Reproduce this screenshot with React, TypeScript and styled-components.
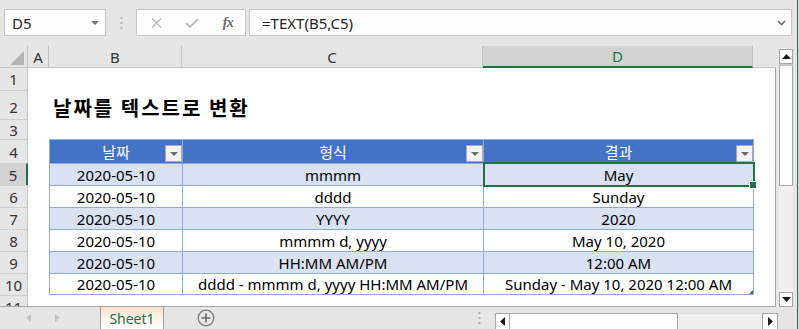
import styled, { createGlobalStyle } from "styled-components";

const GlobalStyle = createGlobalStyle`
  html, body {
    margin: 0;
    padding: 0;
    background: #ffffff;
  }
  body {
    font-family: "Noto Sans", "Noto Sans CJK KR", sans-serif;
  }
`;

const GREEN = "#217346";
const TABLE_LINE = "#8eaadb";
const HEAD_COLS = "28px 21px 133px 301px 270px 23px";
const BODY_COLS = "28px 21px 133px 301px 271px 21px";

const Window = styled.div`
  width: 799px;
  height: 329px;
  display: flex;
  flex-direction: column;
  overflow: hidden;
  background: #e6e6e6;
  box-shadow: inset -1px 0 0 #d8d8d8, inset -2px 0 0 #2c6e49;
  font-family: "Noto Sans", "Noto Sans CJK KR", sans-serif;
  color: #000;
`;

/* formula bar */
const FormulaBar = styled.div`
  height: 46px;
  flex: none;
  box-sizing: border-box;
  padding: 9px 7px 0 4px;
  display: flex;
  align-items: flex-start;
`;

const NameBox = styled.div`
  width: 102px;
  height: 27px;
  box-sizing: border-box;
  border: 1px solid #c6c6c6;
  background: #fdfdfd;
  display: flex;
  align-items: center;
  justify-content: space-between;
  padding: 0 6px 0 7px;
  font-size: 15px;
  color: #262626;
`;

const Grip = styled.div`
  width: 30px;
  height: 27px;
  display: flex;
  align-items: center;
  justify-content: center;
`;

const FxButtons = styled.div`
  width: 110px;
  height: 27px;
  box-sizing: border-box;
  border: 1px solid #c6c6c6;
  background: #fdfdfd;
  display: grid;
  grid-template-columns: repeat(3, 36px);
  padding-left: 1px;
  place-items: center;
`;

const FxLabel = styled.span`
  font-family: "Liberation Serif", serif;
  font-style: italic;
  font-weight: 700;
  font-size: 14px;
  color: #6a6a6a;
  letter-spacing: -0.5px;
`;

const FormulaInput = styled.div`
  flex: 1;
  margin-left: 3px;
  height: 27px;
  box-sizing: border-box;
  border: 1px solid #c6c6c6;
  background: #fdfdfd;
  display: flex;
  align-items: center;
  justify-content: space-between;
  padding: 0 5px 0 12px;
  font-size: 15px;
  color: #262626;
`;

/* sheet */
const Workspace = styled.div`
  height: 261px;
  flex: none;
  display: flex;
`;

const Sheet = styled.div`
  width: 776px;
  display: flex;
  flex-direction: column;
`;

const ColHeaderRow = styled.div`
  height: 22px;
  flex: none;
  display: grid;
  grid-template-columns: ${HEAD_COLS};
`;

const Corner = styled.div`
  box-sizing: border-box;
  display: flex;
  align-items: flex-end;
  justify-content: flex-end;
  padding: 0 3px 2px 0;
  border-right: 1px solid #c4c4c4;
  border-bottom: 1px solid #c4c4c4;
`;

const CornerTriangle = styled.div`
  width: 0;
  height: 0;
  border-left: 14px solid transparent;
  border-bottom: 14px solid #b5b5b5;
`;

const ColHead = styled.div<{ $active?: boolean; $plain?: boolean }>`
  box-sizing: border-box;
  display: flex;
  align-items: center;
  justify-content: center;
  font-size: 15px;
  color: ${(p) => (p.$active ? GREEN : "#333")};
  background: ${(p) => (p.$active ? "#d2d2d2" : "#e6e6e6")};
  border-right: ${(p) => (p.$plain ? "none" : "1px solid #c4c4c4")};
  border-bottom: ${(p) => (p.$active ? `2px solid ${GREEN}` : "1px solid #c4c4c4")};
`;

const Body = styled.div`
  flex: 1;
  overflow: hidden;
  background: #fff;
  border-right: 1px solid #a6a6a6;
  border-bottom: 1px solid #a6a6a6;
`;

const Row = styled.div<{ $h: number }>`
  display: grid;
  grid-template-columns: ${BODY_COLS};
  height: ${(p) => p.$h}px;
`;

const RowHead = styled.div<{ $active?: boolean; $first?: boolean }>`
  box-sizing: border-box;
  display: flex;
  align-items: center;
  justify-content: center;
  font-size: 15px;
  color: #333;
  background: ${(p) => (p.$active ? "#d2d2d2" : "#e6e6e6")};
  border-top: ${(p) => (p.$first ? "none" : "1px solid #cfcfcf")};
  border-right: ${(p) => (p.$active ? `2px solid ${GREEN}` : "1px solid #c4c4c4")};
`;

const Blank = styled.div``;

const Title = styled.div`
  display: flex;
  align-items: center;
  padding: 3px 0 0 4px;
  white-space: nowrap;
  font-family: "Noto Sans CJK KR", "Noto Sans", sans-serif;
  font-weight: 700;
  font-size: 20px;
  letter-spacing: 2px;
`;

const TableCell = styled.div<{ $band?: boolean; $last?: boolean; $right?: boolean }>`
  position: relative;
  box-sizing: border-box;
  display: flex;
  align-items: center;
  justify-content: center;
  white-space: nowrap;
  font-size: 15px;
  background: ${(p) => (p.$band ? "#d9e1f2" : "#fff")};
  border-top: 1px solid ${TABLE_LINE};
  border-left: 1px solid ${TABLE_LINE};
  ${(p) => p.$right && `border-right: 1px solid ${TABLE_LINE};`}
  ${(p) => p.$last && `border-bottom: 1px solid ${TABLE_LINE};`}
`;

const TableHead = styled(TableCell)`
  background: #4472c4;
  color: #fff;
  font-family: "Noto Sans CJK KR", "Noto Sans", sans-serif;
`;

const FilterBtn = styled.div`
  position: absolute;
  right: 0;
  bottom: 1px;
  width: 17px;
  height: 17px;
  box-sizing: border-box;
  border: 1px solid #a9a9a9;
  background: #f3f3f3;
  display: flex;
  align-items: center;
  justify-content: center;
`;

const Selection = styled.div`
  position: absolute;
  inset: -2px -2px -2px -1px;
  border: 2px solid ${GREEN};
  pointer-events: none;
  z-index: 2;
`;

const FillHandle = styled.div`
  position: absolute;
  right: -3px;
  bottom: -3px;
  width: 6px;
  height: 6px;
  background: ${GREEN};
  box-shadow: 0 0 0 1px #fff;
`;

const ResizeMark = styled.div`
  position: absolute;
  right: 0;
  bottom: 0;
  width: 0;
  height: 0;
  border-left: 4px solid transparent;
  border-bottom: 4px solid #3f63b2;
`;

/* vertical scroll */
const VScroll = styled.div`
  width: 23px;
  box-sizing: border-box;
  padding: 3px 6px 0 3px;
  display: flex;
  flex-direction: column;
`;

const ScrollBtn = styled.div<{ $w?: number; $h?: number }>`
  flex: none;
  width: ${(p) => p.$w ?? 14}px;
  height: ${(p) => p.$h ?? 15}px;
  box-sizing: border-box;
  border: 1px solid #a6a6a6;
  background: #fff;
  display: flex;
  align-items: center;
  justify-content: center;
`;

const VThumb = styled.div`
  flex: none;
  height: 122px;
  box-sizing: border-box;
  border: 1px solid #a6a6a6;
  border-top: 2px solid #c8c8c8;
  background: #fff;
`;

const Track = styled.div`
  flex: 1;
  background: #f0f0f0;
`;

/* tab bar */
const TabBar = styled.div`
  height: 22px;
  flex: none;
  display: flex;
  align-items: flex-start;
`;

const TabNav = styled.div`
  width: 100px;
  height: 22px;
  box-sizing: border-box;
  padding-left: 26px;
  display: flex;
  align-items: center;
  gap: 24px;
`;

const SheetTab = styled.div`
  width: 64px;
  height: 22px;
  box-sizing: border-box;
  border-left: 1px solid #9c9c9c;
  border-right: 1px solid #9c9c9c;
  background: linear-gradient(#fae0cd, #fff6ef 60%, #ffffff);
  display: flex;
  align-items: center;
  justify-content: center;
  font-size: 14px;
  color: ${GREEN};
`;

const AddSheet = styled.div`
  width: 18px;
  height: 22px;
  margin-left: 33px;
  display: flex;
  align-items: center;
  justify-content: center;
`;

const TabSpacer = styled.div`
  flex: 1;
`;

const TabGrip = styled.div`
  width: 16px;
  height: 22px;
  margin-right: 8px;
  display: flex;
  align-items: center;
  justify-content: center;
`;

const HScroll = styled.div`
  width: 283px;
  height: 17px;
  margin: 6px 21px 0 0;
  display: flex;
`;

const HThumb = styled.div`
  width: 168px;
  box-sizing: border-box;
  border: 1px solid #a6a6a6;
  border-left: none;
  background: #fff;
`;

const HTrack = styled.div`
  flex: 1;
  background: #f0f0f0;
  border-top: 1px solid #e0e0e0;
`;

const Dots = () => (
  <svg width="3" height="12" viewBox="0 0 3 12">
    <rect x="0.5" y="0" width="2" height="2" fill="#b3b3b3" />
    <rect x="0.5" y="5" width="2" height="2" fill="#b3b3b3" />
    <rect x="0.5" y="10" width="2" height="2" fill="#b3b3b3" />
  </svg>
);

const DownTri = ({ color = "#777" }: { color?: string }) => (
  <svg width="8" height="4" viewBox="0 0 8 4">
    <path d="M0 0h8L4 4z" fill={color} />
  </svg>
);

const rows = [
  ["2020-05-10", "mmmm", "May"],
  ["2020-05-10", "dddd", "Sunday"],
  ["2020-05-10", "YYYY", "2020"],
  ["2020-05-10", "mmmm d, yyyy", "May 10, 2020"],
  ["2020-05-10", "HH:MM AM/PM", "12:00 AM"],
  ["2020-05-10", "dddd - mmmm d, yyyy HH:MM AM/PM", "Sunday - May 10, 2020 12:00 AM"],
];

const headers = ["날짜", "형식", "결과"];

export default function App() {
  return (
    <>
      <GlobalStyle />
      <Window>
        <FormulaBar>
          <NameBox>
            <span>D5</span>
            <DownTri />
          </NameBox>
          <Grip>
            <Dots />
          </Grip>
          <FxButtons>
            <svg width="11" height="10" viewBox="0 0 11 10">
              <path d="M1 0.5L10 9.5M10 0.5L1 9.5" stroke="#bcbcbc" strokeWidth="1.4" />
            </svg>
            <svg width="14" height="10" viewBox="0 0 14 10">
              <path d="M1 5l4 4L13 1" stroke="#bcbcbc" strokeWidth="1.8" fill="none" />
            </svg>
            <FxLabel>fx</FxLabel>
          </FxButtons>
          <FormulaInput>
            <span>=TEXT(B5,C5)</span>
            <svg width="9" height="6" viewBox="0 0 9 6">
              <path d="M1 1l3.5 3.5L8 1" stroke="#6f6f6f" strokeWidth="1.6" fill="none" />
            </svg>
          </FormulaInput>
        </FormulaBar>

        <Workspace>
          <Sheet>
            <ColHeaderRow>
              <Corner>
                <CornerTriangle />
              </Corner>
              <ColHead>A</ColHead>
              <ColHead>B</ColHead>
              <ColHead>C</ColHead>
              <ColHead $active>D</ColHead>
              <ColHead $plain />
            </ColHeaderRow>
            <Body>
              <Row $h={22}>
                <RowHead $first>1</RowHead>
                <Blank />
                <Blank />
                <Blank />
                <Blank />
                <Blank />
              </Row>
              <Row $h={29}>
                <RowHead>2</RowHead>
                <Blank />
                <Title>날짜를 텍스트로 변환</Title>
                <Blank />
                <Blank />
                <Blank />
              </Row>
              <Row $h={20}>
                <RowHead>3</RowHead>
                <Blank />
                <Blank />
                <Blank />
                <Blank />
                <Blank />
              </Row>
              <Row $h={24}>
                <RowHead>4</RowHead>
                <Blank />
                {headers.map((h, i) => (
                  <TableHead key={h} $right={i === 2}>
                    {h}
                    <FilterBtn>
                      <DownTri color="#6b6b6b" />
                    </FilterBtn>
                  </TableHead>
                ))}
                <Blank />
              </Row>
              {rows.map((r, ri) => {
                const band = ri % 2 === 0;
                const last = ri === rows.length - 1;
                return (
                  <Row $h={22} key={ri}>
                    <RowHead $active={ri === 0}>{ri + 5}</RowHead>
                    <Blank />
                    <TableCell $band={band} $last={last}>
                      {r[0]}
                    </TableCell>
                    <TableCell $band={band} $last={last}>
                      {r[1]}
                    </TableCell>
                    <TableCell $band={band} $last={last} $right>
                      {r[2]}
                      {ri === 0 && (
                        <Selection>
                          <FillHandle />
                        </Selection>
                      )}
                      {last && <ResizeMark />}
                    </TableCell>
                    <Blank />
                  </Row>
                );
              })}
              <Row $h={22}>
                <RowHead>11</RowHead>
                <Blank />
                <Blank />
                <Blank />
                <Blank />
                <Blank />
              </Row>
            </Body>
          </Sheet>

          <VScroll>
            <ScrollBtn>
              <svg width="9" height="5" viewBox="0 0 9 5">
                <path d="M0 5h9L4.5 0z" fill="#1a1a1a" />
              </svg>
            </ScrollBtn>
            <VThumb />
            <Track />
            <ScrollBtn>
              <svg width="9" height="5" viewBox="0 0 9 5">
                <path d="M0 0h9L4.5 5z" fill="#1a1a1a" />
              </svg>
            </ScrollBtn>
          </VScroll>
        </Workspace>

        <TabBar>
          <TabNav>
            <svg width="5" height="8" viewBox="0 0 5 8">
              <path d="M5 0v8L0 4z" fill="#c2c2c2" />
            </svg>
            <svg width="5" height="8" viewBox="0 0 5 8">
              <path d="M0 0v8l5-4z" fill="#c2c2c2" />
            </svg>
          </TabNav>
          <SheetTab>Sheet1</SheetTab>
          <AddSheet>
            <svg width="18" height="18" viewBox="0 0 18 18">
              <circle cx="9" cy="9" r="7.8" stroke="#7a7a7a" strokeWidth="1.3" fill="none" />
              <path d="M9 4.5v9M4.5 9h9" stroke="#6a6a6a" strokeWidth="1.6" />
            </svg>
          </AddSheet>
          <TabSpacer />
          <TabGrip>
            <Dots />
          </TabGrip>
          <HScroll>
            <ScrollBtn $w={15} $h={17}>
              <svg width="5" height="9" viewBox="0 0 5 9">
                <path d="M5 0v9L0 4.5z" fill="#1a1a1a" />
              </svg>
            </ScrollBtn>
            <HThumb />
            <HTrack />
            <ScrollBtn $w={16} $h={17}>
              <svg width="5" height="9" viewBox="0 0 5 9">
                <path d="M0 0v9l5-4.5z" fill="#1a1a1a" />
              </svg>
            </ScrollBtn>
          </HScroll>
        </TabBar>
      </Window>
    </>
  );
}
